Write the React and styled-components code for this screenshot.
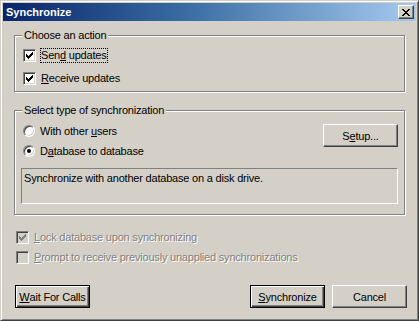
import React from 'react'
import styled, { createGlobalStyle, css } from 'styled-components'

const face = '#d4d0c8'
const shadow = '#808080'
const dark = '#404040'

const GlobalStyle = createGlobalStyle`
  html, body {
    margin: 0;
    padding: 0;
    background: ${face};
  }
  body {
    font-family: "Liberation Sans", Arial, sans-serif;
    font-size: 11px;
    letter-spacing: -0.2px;
    color: #000;
  }
`

const Window = styled.div`
  width: 419px;
  height: 321px;
  box-sizing: border-box;
  background: ${face};
  border: 1px solid;
  border-color: ${face} ${dark} ${dark} ${face};
  box-shadow: inset 1px 1px 0 #fff, inset -1px -1px 0 ${shadow};
  padding: 2px;
  display: flex;
  flex-direction: column;
`

const TitleBar = styled.div`
  height: 18px;
  display: flex;
  align-items: center;
  justify-content: space-between;
  padding: 0 2px 0 3px;
  background: linear-gradient(to right, #0a246a 0%, #3a6ea5 45%, #a6caf0 100%);
  color: #fff;
  font-weight: bold;
  font-size: 11px;
  letter-spacing: 0;
`

const CloseButton = styled.div`
  width: 16px;
  height: 14px;
  box-sizing: border-box;
  background: ${face};
  border: 1px solid;
  border-color: #fff ${dark} ${dark} #fff;
  box-shadow: inset -1px -1px 0 ${shadow};
  display: flex;
  align-items: center;
  justify-content: center;
`

const Body = styled.div`
  flex: 1;
  display: flex;
  flex-direction: column;
  padding: 14px 11px 0 11px;
`

const Group = styled.div`
  border: 1px solid ${shadow};
  box-shadow: inset 1px 1px 0 #fff, 1px 1px 0 #fff;
  padding: 0 ${p => p.$padRight || 6}px ${p => p.$padBottom || 5}px 6px;
  margin-top: ${p => p.$top || 0}px;
  display: flex;
  flex-direction: column;
`

const Legend = styled.div`
  align-self: flex-start;
  margin: -7px 0 0 1px;
  padding: 0 2px;
  height: 13px;
  line-height: 13px;
  background: ${face};
`

const Row = styled.label`
  display: flex;
  align-items: center;
  height: ${p => p.$h || 15}px;
  margin-top: ${p => p.$top || 0}px;
  margin-left: ${p => p.$left || 0}px;
  gap: 4px;
  color: ${p => (p.$disabled ? shadow : '#000')};
  text-shadow: ${p => (p.$disabled ? '1px 1px 0 #fff' : 'none')};
`

const Label = styled.span`
  line-height: 13px;
  padding: 1px 1px;
  ${p =>
    p.$focus &&
    css`
      outline: 1px dotted #000;
      outline-offset: -1px;
    `}
`

const Box = styled.span`
  width: 13px;
  height: 13px;
  box-sizing: border-box;
  flex: none;
  background: ${p => (p.$disabled ? face : '#fff')};
  border: 1px solid;
  border-color: ${shadow} #fff #fff ${shadow};
  box-shadow: inset 1px 1px 0 ${dark}, inset -1px -1px 0 ${face};
  position: relative;
  text-shadow: none;
`

const Round = styled.span`
  width: 12px;
  height: 12px;
  box-sizing: border-box;
  flex: none;
  border-radius: 50%;
  background: #fff;
  border: 1px solid;
  border-color: ${shadow} #fff #fff ${shadow};
  box-shadow: inset 1px 1px 0 ${dark}, inset -1px -1px 0 ${face};
  display: flex;
  align-items: center;
  justify-content: center;
`

const Dot = styled.span`
  width: 4px;
  height: 4px;
  border-radius: 50%;
  background: #000;
`

const TopArea = styled.div`
  display: flex;
  justify-content: space-between;
  align-items: flex-start;
`

const RadioColumn = styled.div`
  display: flex;
  flex-direction: column;
  gap: 4px;
  margin-top: 6px;
`

const Button = styled.div`
  width: 75px;
  height: 23px;
  box-sizing: border-box;
  background: ${face};
  display: flex;
  align-items: center;
  justify-content: center;
  margin-top: ${p => p.$top || 0}px;
  ${p =>
    p.$default
      ? css`
          border: 1px solid #000;
          box-shadow: inset 1px 1px 0 #fff, inset -1px -1px 0 ${dark}, inset -2px -2px 0 ${shadow};
        `
      : css`
          border: 1px solid;
          border-color: #fff ${dark} ${dark} #fff;
          box-shadow: inset -1px -1px 0 ${shadow};
        `}
`

const Description = styled.div`
  margin-top: 9px;
  height: 36px;
  box-sizing: border-box;
  border: 1px solid;
  border-color: ${shadow} #fff #fff ${shadow};
  padding: 3px 2px;
  line-height: 13px;
`

const Footer = styled.div`
  display: flex;
  justify-content: space-between;
  margin: 20px -2px 0 1px;
`

const ButtonPair = styled.div`
  display: flex;
  gap: 7px;
`

const checkRows = [
  [6, 6], [5, 6], [0, 0, 4, 6], [0, 1, 3, 5], [0, 4], [1, 3], [2, 2]
]

const Check = ({ color }) => (
  <svg width="7" height="7" viewBox="0 0 7 7" style={{ position: 'absolute', left: 2, top: 2 }} shapeRendering="crispEdges">
    {checkRows.flatMap((r, y) => {
      const out = []
      for (let i = 0; i < r.length; i += 2) {
        out.push(<rect key={`${y}-${i}`} x={r[i]} y={y} width={r[i + 1] - r[i] + 1} height="1" fill={color} />)
      }
      return out
    })}
  </svg>
)

const CheckBox = ({ checked, disabled }) => (
  <Box $disabled={disabled}>{checked && <Check color={disabled ? shadow : '#000'} />}</Box>
)

const Radio = ({ checked }) => <Round>{checked && <Dot />}</Round>

export default function App() {
  return (
    <>
      <GlobalStyle />
      <Window>
        <TitleBar>
          <span>Synchronize</span>
          <CloseButton>
            <svg width="8" height="7" viewBox="0 0 8 7" shapeRendering="crispEdges">
              <path d="M0 0h2v1h-2zM6 0h2v1h-2zM1 1h2v1h-2zM5 1h2v1h-2zM2 2h4v1h-4zM3 3h2v1h-2zM2 4h4v1h-4zM1 5h2v1h-2zM5 5h2v1h-2zM0 6h2v1h-2zM6 6h2v1h-2z" fill="#000" />
            </svg>
          </CloseButton>
        </TitleBar>
        <Body>
          <Group>
            <Legend>Choose an action</Legend>
            <Row $top={6} $left={2}>
              <CheckBox checked />
              <Label $focus>Sen<u>d</u> updates</Label>
            </Row>
            <Row $top={8} $left={2}>
              <CheckBox checked />
              <Label><u>R</u>eceive updates</Label>
            </Row>
          </Group>

          <Group $top={18} $padBottom={10}>
            <Legend>Select type of synchronization</Legend>
            <TopArea>
              <RadioColumn>
                <Row $h={16} $left={2}>
                  <Radio />
                  <Label>With other <u>u</u>sers</Label>
                </Row>
                <Row $h={16} $left={2}>
                  <Radio checked />
                  <Label>D<u>a</u>tabase to database</Label>
                </Row>
              </RadioColumn>
              <Button $top={7}>S<u>e</u>tup...</Button>
            </TopArea>
            <Description>Synchronize with another database on a disk drive.</Description>
          </Group>

          <Row $top={15} $left={2} $disabled>
            <CheckBox checked disabled />
            <Label><u>L</u>ock database upon synchronizing</Label>
          </Row>
          <Row $top={5} $left={2} $disabled>
            <CheckBox disabled />
            <Label><u>P</u>rompt to receive previously unapplied synchronizations</Label>
          </Row>

          <Footer>
            <Button $default><u>W</u>ait For Calls</Button>
            <ButtonPair>
              <Button $default><u>S</u>ynchronize</Button>
              <Button>Cancel</Button>
            </ButtonPair>
          </Footer>
        </Body>
      </Window>
    </>
  )
}
